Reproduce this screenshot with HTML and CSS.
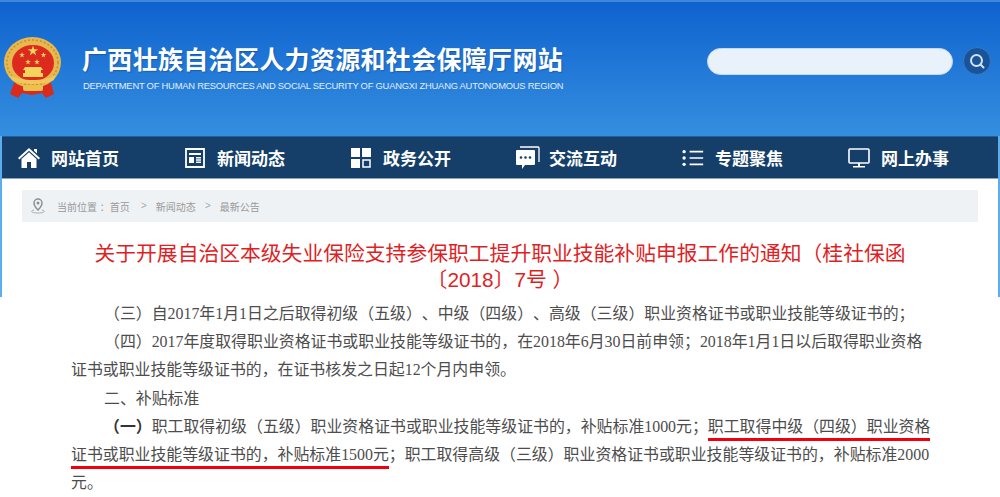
FILE: index.html
```html
<!DOCTYPE html>
<html lang="zh-CN">
<head>
    <meta charset="UTF-8">
    <meta name="viewport" content="width=device-width, initial-scale=1.0">
    <title>广西壮族自治区人力资源和社会保障厅网站</title>
    <link rel="stylesheet" href="styles.css">
</head>
<body>
    <div class="top">
        <header class="header">
            <svg class="emblem" viewBox="0 0 57 61">
                <defs>
                    <polygon id="star" points="0,-1 .225,-.309 .951,-.309 .363,.118 .588,.809 0,.382 -.588,.809 -.363,.118 -.951,-.309 -.225,-.309"/>
                </defs>
                <path d="M10 46h37l3 11-8 4-4-5-10 2-10-2-4 5-8-4z" fill="#d92a1c"/>
                <ellipse cx="28.500" cy="25.500" rx="28.500" ry="25.500" fill="#e6b84e"/>
                <ellipse cx="28.500" cy="25.500" rx="25.500" ry="22.500" fill="none" stroke="#c98f2c" stroke-width="1.500" stroke-dasharray="2 2"/>
                <ellipse cx="29" cy="26" rx="21" ry="18" fill="#dd2a1e"/>
                <g fill="#f6d35c">
                    <use href="#star" transform="translate(29 14) scale(5.500)"/>
                    <use href="#star" transform="translate(18 18) scale(3)"/>
                    <use href="#star" transform="translate(39.500 18) scale(3)"/>
                    <use href="#star" transform="translate(24 25) scale(3)"/>
                    <use href="#star" transform="translate(33 25) scale(3)"/>
                    <path d="M21 30h16l2 3h-2v3h2v4H19v-4h2v-3h-2z"/>
                </g>
                <path d="M6 38c6 4 15 5 23 5s16-1 22-5l-1 5c-6 3-13 4-21 4s-15-1-21-4z" fill="#f0c75c"/>
                <rect x="19" y="48" width="20" height="6" rx="2" fill="#edc150"/>
            </svg>
            <div class="brand">
                <div class="brand-name">广西壮族自治区人力资源和社会保障厅网站</div>
                <div class="brand-en">DEPARTMENT OF HUMAN RESOURCES AND SOCIAL SECURITY OF GUANGXI ZHUANG AUTONOMOUS REGION</div>
            </div>
            <div class="search">
                <input class="search-input" type="text">
                <button class="search-btn">
                    <svg viewBox="0 0 16 16" width="16" height="16">
                        <circle cx="7.500" cy="7.500" r="5.500" fill="none" stroke="#d6e2f0" stroke-width="2"/>
                        <path d="M11.500 11.500l3 3" stroke="#d6e2f0" stroke-width="2" stroke-linecap="round"/>
                    </svg>
                </button>
            </div>
        </header>

        <nav class="nav">
            <a class="nav-item">
                <svg class="nav-icon" viewBox="0 0 22 20">
                    <path d="M11 0l11 10-1.300 1.400L11 2.700 1.300 11.400 0 10zM3.500 11L11 4.300l7.500 6.700V20h-5.500v-6H9v6H3.500zM16 1h3v4.500l-3-2.700z" fill="#fff"/>
                </svg>
                网站首页
            </a>
            <a class="nav-item">
                <svg class="nav-icon" viewBox="0 0 20 20">
                    <path d="M1 1h18v18H1z" fill="none" stroke="#fff" stroke-width="1.800"/>
                    <path d="M4 5h12v2H4zM4 9h5v6H4zM11 9h5v1.500h-5zM11 11.300h5v1.500h-5zM11 13.600h5v1.500h-5z" fill="#fff"/>
                </svg>
                新闻动态
            </a>
            <a class="nav-item">
                <svg class="nav-icon" viewBox="0 0 20 20">
                    <path d="M0 0h9v9H0zM11 0h9v9h-9zM0 11h9v9H0z" fill="#fff"/>
                    <path d="M12 12h7v7h-7z" fill="none" stroke="#fff" stroke-width="1.500"/>
                </svg>
                政务公开
            </a>
            <a class="nav-item">
                <svg class="nav-icon nav-icon-lg" viewBox="0 0 24 24">
                    <path d="M1 4h17a1 1 0 0 1 1 1v13a1 1 0 0 1-1 1H9l-3 4v-4H1a1 1 0 0 1-1-1V5a1 1 0 0 1 1-1z" fill="#fff"/>
                    <path d="M4 1h18a1 1 0 0 1 1 1v14" fill="none" stroke="#fff" stroke-width="1.300"/>
                    <circle cx="5" cy="11.500" r="1.300" fill="#153f69"/>
                    <circle cx="9.500" cy="11.500" r="1.300" fill="#153f69"/>
                    <circle cx="14" cy="11.500" r="1.300" fill="#153f69"/>
                </svg>
                交流互动
            </a>
            <a class="nav-item">
                <svg class="nav-icon" viewBox="0 0 26 20">
                    <circle cx="2.500" cy="2.500" r="2" fill="#fff"/>
                    <circle cx="2.500" cy="10" r="2" fill="#fff"/>
                    <circle cx="2.500" cy="17.500" r="2" fill="#fff"/>
                    <path d="M9 1.500h16v2H9zM9 9h16v2H9zM9 16.500h16v2H9z" fill="#fff"/>
                </svg>
                专题聚焦
            </a>
            <a class="nav-item">
                <svg class="nav-icon" viewBox="0 0 22 20">
                    <path d="M2 1h18a1 1 0 0 1 1 1v12a1 1 0 0 1-1 1H2a1 1 0 0 1-1-1V2a1 1 0 0 1 1-1z" fill="none" stroke="#fff" stroke-width="1.600"/>
                    <path d="M10 15h2v3h-2zM5 18h12v1.500H5z" fill="#fff"/>
                </svg>
                网上办事
            </a>
        </nav>

        <div class="crumbs">
            <svg class="crumbs-icon" viewBox="0 0 16 16">
                <path d="M8 1a4 4 0 0 1 4 4c0 3-4 7-4 7S4 8 4 5a4 4 0 0 1 4-4z" fill="none" stroke="#8f8f8f" stroke-width="1.500"/>
                <circle cx="8" cy="5" r="1.500" fill="#8f8f8f"/>
                <path d="M4 12c-4 1-3 3 4 3s8-2 4-3" fill="none" stroke="#aaa"/>
            </svg>
            <span class="crumb-label">当前位置 ：首页</span>
            <span class="crumb-sep">&gt;</span>
            <span>新闻动态</span>
            <span class="crumb-sep">&gt;</span>
            <span>最新公告</span>
        </div>

        <h1 class="title">关于开展自治区本级失业保险支持参保职工提升职业技能补贴申报工作的通知（桂社保函〔2018〕7号 ）</h1>
    </div>

    <main class="article">
        <p class="indent">（三）自2017年1月1日之后取得初级（五级）、中级（四级）、高级（三级）职业资格证书或职业技能等级证书的；</p>
        <p class="indent">（四）2017年度取得职业资格证书或职业技能等级证书的，在2018年6月30日前申领；2018年1月1日以后取得职业资格证书或职业技能等级证书的，在证书核发之日起12个月内申领。</p>
        <p class="indent">二、补贴标准</p>
        <p class="indent"><b>（一）</b>职工取得初级（五级）职业资格证书或职业技能等级证书的，补贴标准1000元；<span class="mark">职工取得中级（四级）职业资格证书或职业技能等级证书的，补贴标准1500元</span>；职工取得高级（三级）职业资格证书或职业技能等级证书的，补贴标准2000元。</p>
    </main>
</body>
</html>
```

FILE: styles.css
```css
* {
    box-sizing: border-box;
}
html, body {
    margin: 0;
    overflow: hidden;
}
body {
    font-family: "Liberation Sans", "Noto Sans CJK SC", sans-serif;
    background: #fff;
    text-spacing-trim: space-all;
}
.top {
    height: 297px;
    border-left: 2px solid #5aaeef;
    border-right: 2px solid #5aaeef;
    background: #fff;
}
.header {
    display: flex;
    align-items: flex-start;
    height: 136px;
    margin: 0 -2px;
    padding: 35px 9px 0 4px;
    border-top: 2px solid #3f86dc;
    background: linear-gradient(#0f62cf, #358fdf);
}
.emblem {
    width: 57px;
    height: 61px;
    flex: none;
}
.brand {
    margin-left: 21px;
    color: #fff;
}
.brand-name {
    font-size: 25px;
    font-weight: 700;
    line-height: 30px;
    margin-top: 8px;
    letter-spacing: .32px;
    white-space: nowrap;
    text-shadow: 1px 1px 1px rgba(20, 60, 120, .45);
}
.brand-en {
    font-size: 9.400px;
    line-height: 12px;
    margin-top: 5px;
    margin-left: 1px;
    letter-spacing: -.23px;
    white-space: nowrap;
    color: #e3eefa;
}
.search {
    display: flex;
    align-items: center;
    gap: 10px;
    margin-left: auto;
    margin-top: 10px;
}
.search-input {
    width: 246px;
    height: 27px;
    border: 1px solid #c5d9f2;
    border-radius: 14px;
    background: #e9f1fb;
}
.search-btn {
    display: flex;
    align-items: center;
    justify-content: center;
    width: 28px;
    height: 28px;
    padding: 0;
    border: 1px solid #3a78bd;
    border-radius: 50%;
    background: #17549b;
}
.nav {
    display: flex;
    height: 43px;
    background: #153f69;
    border-top: 1px solid #1f5f9e;
    border-bottom: 1px solid #8fa3b8;
}
.nav-item {
    display: flex;
    align-items: center;
    width: 166px;
    padding-left: 16px;
    color: #fff;
    font-size: 17px;
    font-weight: 700;
    white-space: nowrap;
}
.nav-icon {
    width: 22px;
    height: 20px;
    margin-right: 11px;
    flex: none;
}
.nav-icon-lg {
    width: 24px;
    height: 24px;
    margin-right: 9px;
}
.crumbs {
    display: flex;
    align-items: center;
    height: 32px;
    margin: 11px 20px 0;
    padding-left: 8px;
    background: #eff2f5;
    color: #999;
    font-size: 10px;
}
.crumbs-icon {
    width: 16px;
    height: 16px;
    margin-right: 11px;
}
.crumb-label {
    margin-right: 2px;
}
.crumb-sep {
    width: 24px;
    text-align: center;
    font-family: "Liberation Mono", monospace;
    color: #aaa;
}
.title {
    width: 850px;
    margin: 19px auto 0;
    color: #df1f26;
    font-size: 20.800px;
    font-weight: 400;
    line-height: 26px;
    text-align: center;
}
.article {
    padding: 3px 68px 0 71px;
    color: #4d4d4d;
    font-family: "Liberation Serif", "Noto Sans CJK SC", serif;
    font-size: 15.900px;
    line-height: 28.200px;
}
.article p {
    margin: 0;
}
.indent {
    text-indent: 33px;
}
.article b {
    color: #333;
}
.mark {
    padding-bottom: 3px;
    border-bottom: 3px solid #f0000f;
}
```
